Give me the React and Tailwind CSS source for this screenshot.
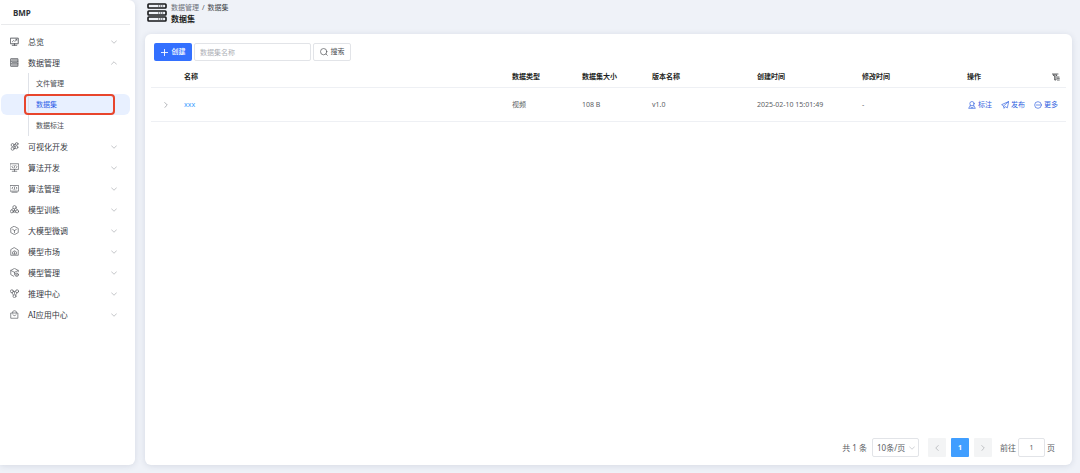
import React, { useState } from 'react';

// Shared wrapper for the 24x24 line icons
const Icon = ({ className = 'size-[9px]', children, strokeWidth = 1.8 }) => (
  <svg
    viewBox="0 0 24 24"
    fill="none"
    stroke="currentColor"
    strokeWidth={strokeWidth}
    strokeLinecap="round"
    strokeLinejoin="round"
    aria-hidden="true"
    className={`shrink-0 ${className}`}
  >
    {children}
  </svg>
);

const Chevron = ({ d, className = 'size-[6px]' }) => (
  <Icon className={className} strokeWidth={2.5}><path d={d} /></Icon>
);

const DOWN = 'M2 7l10 10 10-10';
const UP = 'M2 17l10-10 10 10';
const RIGHT = 'M7 2l10 10-10 10';
const LEFT = 'M17 2l-10 10 10 10';

const icons = {
  overview: <><path d="M2 3h20v15H2zM6 22h12M12 18v4" strokeWidth="2.4" /><path d="M6 13l4-4 3 3 5-6M15 6h3v3" /></>,
  data: <><path d="M3 2h18v20H3zM3 8.5h18M3 15.5h18" strokeWidth="2.4" /><path d="M6 5.2h12M6 12h12M6 18.8h12" /></>,
  visual: <><circle cx="18" cy="5" r="3.5" /><circle cx="7" cy="8" r="4" /><circle cx="17" cy="14" r="4" /><circle cx="7" cy="18" r="4" /><path d="M11 7l4-2M10 11l4 2M11 18l3-2" /></>,
  algoDev: <><path d="M1 2h22v15H1zM12 17v5M6 22h12" /><path d="M8 7l-3 3 3 3M16 7l3 3-3 3M13 7l-2 6" /></>,
  algoManage: <><path d="M1 4h22v15H1zM5 22h14" /><path d="M8 8l-3 3 3 3M16 8l3 3-3 3M12 8v6" /></>,
  train: <><circle cx="12" cy="6" r="4.5" /><circle cx="5" cy="17" r="4" /><circle cx="19" cy="17" r="4" /><path d="M8 9l-4 4M16 9l4 4M9 19h6M12 11v4l-3 1M12 15l3 1" /></>,
  tune: <><path d="M12 1l10 5.5v11L12 23 2 17.5v-11z" /><path d="M7 9l5 3 5-3M12 12v6" /></>,
  market: <><path d="M12 2l10 6v14H2V8z" /><path d="M7 18v-5l5-3 5 3v5zM12 13v5" /></>,
  model: <><path d="M22 10V6.500L12 1 2 6.500v11l8 4.500M2 6.500l10 5 10-5M12 11.500V17" /><circle cx="18" cy="18" r="4.500" /><path d="M18 16v4" /></>,
  infer: <><circle cx="5" cy="6" r="4" /><circle cx="19" cy="6" r="4" /><circle cx="12" cy="19" r="4" /><path d="M9 5l3 3 3-3M5 10l4 6M19 10l-4 6M12 8v4" /></>,
  app: <><path d="M3 8h18v14H3zM7 8V5c0-4 10-4 10 0v3" /><path d="M8 13c1 3 7 3 8 0" /></>,
};

const menu = [
  { icon: 'overview', label: '总览' },
  { icon: 'data', label: '数据管理', children: ['文件管理', '数据集', '数据标注'] },
  { icon: 'visual', label: '可视化开发' },
  { icon: 'algoDev', label: '算法开发' },
  { icon: 'algoManage', label: '算法管理' },
  { icon: 'train', label: '模型训练' },
  { icon: 'tune', label: '大模型微调' },
  { icon: 'market', label: '模型市场' },
  { icon: 'model', label: '模型管理' },
  { icon: 'infer', label: '推理中心' },
  { icon: 'app', label: 'AI应用中心' },
];

const columns = ['名称', '数据类型', '数据集大小', '版本名称', '创建时间', '修改时间'];

const rows = [
  { name: 'xxx', type: '视频', size: '108 B', version: 'v1.0', created: '2025-02-10 15:01:49', updated: '-' },
];

const SubMenu = ({ items, active, onSelect }) => (
  <div className="relative">
    <ul>
      {items.map((item) => (
        <li key={item} className="relative h-[21px]">
          <a
            href="#"
            onClick={() => onSelect(item)}
            className={`flex h-full items-center rounded-md pl-[35px] pt-[2px] text-[7px] ${item === active ? 'bg-[#e8f0ff] text-[#2f62e8]' : 'text-[#4a4d52]'}`}
          >
            {item}
          </a>
          {item === active && (
            <span className="pointer-events-none absolute inset-y-0 left-[23px] right-[15px] z-10 rounded-[4px] border-2 border-[#e8452c]" />
          )}
        </li>
      ))}
    </ul>
    <span className="absolute inset-y-0 left-[27px] w-px bg-[#dfe2e8]" />
  </div>
);

const Sidebar = () => {
  const [open, setOpen] = useState('数据管理');
  const [active, setActive] = useState('数据集');

  return (
    <aside className="w-[135px] shrink-0 rounded-r-md bg-white shadow-[0_1px_6px_rgba(30,50,80,0.12)]">
      <div className="ml-px mr-[5px] flex h-[25px] items-center border-b border-[#e9eaec] pl-3 pt-px text-[8px] font-bold text-[#303338]">BMP</div>
      <nav className="ml-px mr-[5px] pt-[6px]">
        {menu.map(({ icon, label, children }) => (
          <div key={label}>
            <button
              type="button"
              aria-expanded={open === label}
              onClick={() => setOpen(open === label ? '' : label)}
              className="flex h-[21px] w-full items-center pl-[9px] pr-[13px] text-[8px] text-[#36393f]"
            >
              <Icon className="size-[9px] text-[#55585e]">{icons[icon]}</Icon>
              <span className="ml-[9px] flex-1 text-left">{label}</span>
              <span className="text-[#a0a3a8]"><Chevron d={open === label ? UP : DOWN} /></span>
            </button>
            {children && open === label && <SubMenu items={children} active={active} onSelect={setActive} />}
          </div>
        ))}
      </nav>
    </aside>
  );
};

const PageHeader = () => (
  <header className="flex h-[34px] items-start gap-1 pl-[2px] pt-[2px]">
    <svg viewBox="0 0 20 21" className="h-[21px] w-5" fill="none" stroke="#17181a" aria-hidden="true">
      {[2, 9, 15].map((y) => (
        <g key={y}>
          <rect x="1" y={y} width="18" height="4" rx="0.8" strokeWidth="1.6" />
          <path d={`M11 ${y + 2}h6`} strokeDasharray="1.2 0.8" strokeWidth="0.8" />
        </g>
      ))}
    </svg>
    <div className="leading-none">
      <div className="flex h-[10px] items-center gap-[3px] text-[7px]">
        <a href="#" className="text-[#6c7078]">数据管理</a>
        <span className="text-[#55585e]">/</span>
        <span className="text-[#44474d]">数据集</span>
      </div>
      <h1 className="mt-[2px] text-[8px] font-bold leading-[10px] text-[#1d1f23]">数据集</h1>
    </div>
  </header>
);

const Toolbar = () => (
  <form className="flex gap-[2px] px-[3px]" onSubmit={(e) => e.preventDefault()}>
    <button type="button" className="flex h-[18px] w-[38px] items-center justify-center gap-1 rounded-[2px] bg-[#3370ff] text-[7px] font-medium text-white">
      <Icon className="size-[7px]" strokeWidth={3}><path d="M12 1v22M1 12h22" /></Icon>
      创建
    </button>
    <input
      type="text"
      aria-label="数据集名称"
      placeholder="数据集名称"
      className="h-[18px] w-[117px] rounded-[2px] border border-[#e2e4e8] px-[5px] text-[7px] outline-none placeholder:text-[#adb0b6]"
    />
    <button type="submit" className="flex h-[18px] w-[38px] items-center justify-center gap-[3px] rounded-[2px] border border-[#e2e4e8] text-[7px] text-[#4a4d52]">
      <Icon className="size-2" strokeWidth={2}><circle cx="11" cy="11" r="9.5" /><path d="M18 18l4 4" /></Icon>
      搜索
    </button>
  </form>
);

const Action = ({ label, children }) => (
  <button type="button" className="flex items-center gap-[2px] whitespace-nowrap">
    <Icon className="size-2" strokeWidth={2}>{children}</Icon>
    {label}
  </button>
);

const DataTable = () => (
  <table className="mt-[3px] w-full table-fixed text-left text-[7px] text-[#5b5e64]">
    <colgroup>
      <col className="w-[29px]" />
      <col />
      <col className="w-[70px]" />
      <col className="w-[70px]" />
      <col className="w-[105px]" />
      <col className="w-[105px]" />
      <col className="w-[105px]" />
      <col className="w-[103px]" />
    </colgroup>
    <thead>
      <tr className="h-[23px] border-b border-[#eef0f4] text-[#1d1f23]">
        <th aria-label="展开" />
        {columns.map((c) => <th key={c} className="px-1 pt-[3px] font-bold">{c}</th>)}
        <th className="px-1 pt-[3px] font-bold">
          <div className="flex items-center justify-between pr-[2px]">
            操作
            <button type="button" aria-label="筛选">
              <Icon className="size-2" strokeWidth={2}>
                <path d="M1 3h17M4 6h11l-3 4v11H8V10z" />
                <path d="M16 12h5M16 16h6M16 21h6" />
              </Icon>
            </button>
          </div>
        </th>
      </tr>
    </thead>
    <tbody>
      {rows.map((r) => (
        <tr key={r.name} className="h-[34px] border-b border-[#eef0f4]">
          <td className="pt-[2px]">
            <button type="button" aria-label="展开行" className="flex w-full justify-center text-[#85888e]">
              <Chevron d={RIGHT} />
            </button>
          </td>
          <td className="px-1 pt-[2px]"><a href="#" className="text-[#409eff]">{r.name}</a></td>
          <td className="px-1 pt-[2px]">{r.type}</td>
          <td className="px-1 pt-[2px]">{r.size}</td>
          <td className="px-1 pt-[2px]">{r.version}</td>
          <td className="whitespace-nowrap px-1 pt-[2px]">{r.created}</td>
          <td className="px-1 pt-[2px]">{r.updated}</td>
          <td className="px-1 pt-[2px]">
            <div className="flex justify-between pl-px pr-[4px] text-[#2f5fe0]">
              <Action label="标注">
                <circle cx="12" cy="8" r="6.5" />
                <path d="M7 13l-5 9h20l-5-9M8 18l4 3 4-3" />
              </Action>
              <Action label="发布"><path d="M22 2L2 11l6 4 1 7 4-5 5 3zM22 2L8 15" /></Action>
              <Action label="更多"><circle cx="12" cy="12" r="10" /><path d="M7 12h10" /></Action>
            </div>
          </td>
        </tr>
      ))}
    </tbody>
  </table>
);

const Pagination = () => (
  <div className="mt-auto flex items-center justify-end pr-[11px] text-[8px] text-[#5b5e64]">
    <span>共 1 条</span>
    <div className="relative ml-[5px]">
      <select aria-label="每页条数" className="h-[19px] w-[47px] appearance-none rounded-[2px] border border-[#e2e4e8] bg-white pl-1 text-[8px]">
        <option>10条/页</option>
        <option>20条/页</option>
        <option>50条/页</option>
      </select>
      <span className="pointer-events-none absolute right-1 top-[7px] text-[#b4b7bd]"><Chevron d={DOWN} /></span>
    </div>
    <div className="ml-[9px] flex gap-[5px]">
      <button type="button" disabled aria-label="上一页" className="flex h-[19px] w-[18px] items-center justify-center rounded-[1px] bg-[#f3f4f5] text-[#a0a3a8]">
        <Chevron d={LEFT} />
      </button>
      <button type="button" aria-current="page" className="h-[19px] w-[18px] rounded-[1px] bg-[#409eff] pt-px text-[7px] font-bold text-white">1</button>
      <button type="button" disabled aria-label="下一页" className="flex h-[19px] w-[18px] items-center justify-center rounded-[1px] bg-[#f3f4f5] text-[#a0a3a8]">
        <Chevron d={RIGHT} />
      </button>
    </div>
    <label className="ml-2 flex items-center gap-[2px]">
      前往
      <input type="text" defaultValue="1" className="h-[19px] w-[27px] rounded-[2px] border border-[#e2e4e8] text-center text-[7px] outline-none" />
      页
    </label>
  </div>
);

const App = () => (
  <div className="flex min-h-screen gap-[10px] bg-[#eff2f8] pb-2 pr-2 font-['Noto_Sans','Noto_Sans_CJK_SC',sans-serif]">
    <Sidebar />
    <main className="flex min-w-0 flex-1 flex-col">
      <PageHeader />
      <section className="flex flex-1 flex-col rounded-md bg-white px-[6px] pb-2 pt-[9px] shadow-[0_1px_6px_rgba(30,50,80,0.12)]">
        <Toolbar />
        <DataTable />
        <Pagination />
      </section>
    </main>
  </div>
);

export default App;
